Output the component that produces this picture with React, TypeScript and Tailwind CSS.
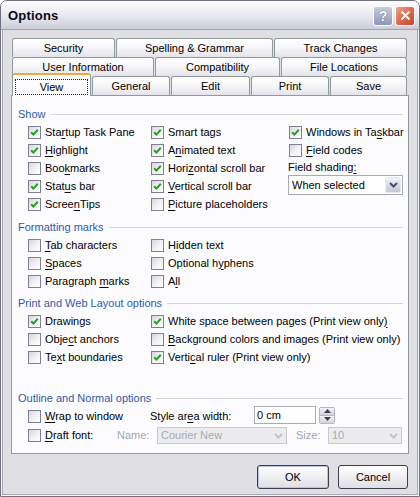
import React from 'react';

type Item = { t: string; u?: number; on?: boolean };

const Mn = ({ t, u }: { t: string; u?: number }) =>
  u === undefined ? (
    <>{t}</>
  ) : (
    <>
      {t.slice(0, u)}
      <span className="underline underline-offset-[2px]">{t[u]}</span>
      {t.slice(u + 1)}
    </>
  );

const Box = ({ on }: { on?: boolean }) => (
  <span className="flex h-[13px] w-[13px] shrink-0 items-center justify-center border border-[#7d8090] bg-gradient-to-br from-[#d6d6dc] via-[#f1f1f3] to-white">
    {on && (
      <svg width="9" height="9" viewBox="0 0 9 9">
        <path d="M1.2 4.2 L3.4 6.6 L7.8 1.8" fill="none" stroke="#21a121" strokeWidth="2" />
      </svg>
    )}
  </span>
);

const Chk = ({ t, u, on }: Item) => (
  <div className="flex h-[18px] items-center">
    <Box on={on} />
    <span className="ml-[4px] whitespace-nowrap">
      <Mn t={t} u={u} />
    </span>
  </div>
);

const Tab = ({ t, w }: { t: string; w: string }) => (
  <div
    className={`flex h-[19px] shrink-0 items-center justify-center rounded-t-[3px] border border-b-0 border-[#919b9c] bg-gradient-to-b from-white via-[#f6f6f9] to-[#e3e3ea] ${w}`}
  >
    {t}
  </div>
);

const Group = ({ t, className }: { t: string; className: string }) => (
  <div className={`flex h-[16px] items-center pl-[6px] ${className}`}>
    <span className="text-[#2f5aa8]">{t}</span>
    <div className="ml-[5px] mr-[5px] h-px flex-1 bg-[#d3d3dc]" />
  </div>
);

const Chevron = ({ c }: { c: string }) => (
  <svg width="9" height="6" viewBox="0 0 9 6">
    <path d="M1 1 L4.5 4.5 L8 1" fill="none" stroke={c} strokeWidth="2" />
  </svg>
);

const showCols: Item[][] = [
  [
    { t: 'Startup Task Pane', u: 3, on: true },
    { t: 'Highlight', u: 0, on: true },
    { t: 'Bookmarks', u: 3 },
    { t: 'Status bar', u: 4, on: true },
    { t: 'ScreenTips', u: 5, on: true },
  ],
  [
    { t: 'Smart tags', on: true },
    { t: 'Animated text', u: 1, on: true },
    { t: 'Horizontal scroll bar', u: 4, on: true },
    { t: 'Vertical scroll bar', u: 0, on: true },
    { t: 'Picture placeholders', u: 0 },
  ],
];

const fmtCols: Item[][] = [
  [
    { t: 'Tab characters', u: 0 },
    { t: 'Spaces', u: 0 },
    { t: 'Paragraph marks', u: 10 },
  ],
  [
    { t: 'Hidden text', u: 1 },
    { t: 'Optional hyphens', u: 10 },
    { t: 'All', u: 1 },
  ],
];

const printCols: Item[][] = [
  [
    { t: 'Drawings', on: true },
    { t: 'Object anchors', u: 4 },
    { t: 'Text boundaries', u: 2 },
  ],
  [
    { t: 'White space between pages (Print view only)', u: 42, on: true },
    { t: 'Background colors and images (Print view only)', u: 0 },
    { t: 'Vertical ruler (Print view only)', u: 5, on: true },
  ],
];

const TwoCols = ({ cols }: { cols: Item[][] }) => (
  <div className="mt-[1px] flex pl-[16px]">
    <div className="w-[123px]">
      {cols[0].map((i) => (
        <Chk key={i.t} {...i} />
      ))}
    </div>
    <div>
      {cols[1].map((i) => (
        <Chk key={i.t} {...i} />
      ))}
    </div>
  </div>
);

export default function App() {
  return (
    <div className="h-[497px] w-[420px] bg-white">
      <div className="flex h-[497px] w-[420px] flex-col rounded-t-[7px] border border-[#70707f] bg-[#e0dfe3] font-['Liberation_Sans',Arial,sans-serif] text-[11px] leading-none text-black shadow-[inset_0_0_0_1px_#f6f6f9,inset_0_0_0_2px_#a9a9b6]">
        {/* title bar */}
        <div className="flex h-[29px] shrink-0 items-center rounded-t-[6px] border-b border-[#a2a2b2] bg-gradient-to-b from-[#fefefe] via-[#e9e9f0] to-[#cdcdd8] pl-[7px] pr-[4px]">
          <span className="mt-[1px] text-[13px] font-bold tracking-[0.2px] text-[#0b0b14]">Options</span>
          <div className="ml-auto mt-[1px] flex gap-[2px]">
            <div className="flex h-[20px] w-[20px] items-center justify-center rounded-[3px] border border-white bg-gradient-to-b from-[#c8cbe0] to-[#8f95b8] text-[14px] font-bold text-white [text-shadow:0_0_1px_#333]">
              ?
            </div>
            <div className="flex h-[20px] w-[20px] items-center justify-center rounded-[3px] border border-white bg-gradient-to-br from-[#f0a08a] via-[#dd6a50] to-[#c8402a]">
              <svg width="11" height="11" viewBox="0 0 11 11">
                <path d="M1.5 1.5 L9.5 9.5 M9.5 1.5 L1.5 9.5" stroke="white" strokeWidth="2" />
              </svg>
            </div>
          </div>
        </div>

        {/* body */}
        <div className="pl-[10px] pt-[8px]">
          <div className="ml-[1px] flex gap-[1px]">
            <Tab t="Security" w="w-[103px]" />
            <Tab t="Spelling & Grammar" w="w-[157px]" />
            <Tab t="Track Changes" w="w-[133px]" />
          </div>
          <div className="ml-[1px] flex gap-[1px]">
            <Tab t="User Information" w="w-[142px]" />
            <Tab t="Compatibility" w="w-[125px]" />
            <Tab t="File Locations" w="w-[126px]" />
          </div>
          <div className="ml-[1px] flex h-[19px] items-end gap-[1px]">
            <div className="relative z-10 mb-[-1px] flex h-[23px] w-[79px] shrink-0 rounded-t-[3px] border-x border-t-2 border-x-[#919b9c] border-t-[#f2a73a] bg-[#fcfcfe] px-[2px] pb-[1px] pt-[4px]">
              <div className="flex flex-1 items-center justify-center border border-dotted border-[#222]">View</div>
            </div>
            <Tab t="General" w="w-[78px]" />
            <Tab t="Edit" w="w-[79px]" />
            <Tab t="Print" w="w-[78px]" />
            <Tab t="Save" w="w-[77px]" />
          </div>

          {/* panel */}
          <div className="h-[359px] w-[398px] border border-[#919b9c] bg-[#fcfcfe]">
            <Group t="Show" className="mt-[10px]" />
            <div className="mt-[1px] flex pl-[16px]">
              <div className="w-[123px]">
                {showCols[0].map((i) => (
                  <Chk key={i.t} {...i} />
                ))}
              </div>
              <div className="w-[137px]">
                {showCols[1].map((i) => (
                  <Chk key={i.t} {...i} />
                ))}
              </div>
              <div className="w-[115px]">
                <div className="ml-[1px]">
                  <Chk t="Windows in Taskbar" u={13} on />
                  <Chk t="Field codes" u={0} />
                </div>
                <div className="flex h-[16px] items-center">
                  Field shading<span className="underline underline-offset-[2px]">:</span>
                </div>
                <div className="flex h-[20px] items-center border border-[#a5acb5] bg-white">
                  <span className="flex-1 pl-[3px]">When selected</span>
                  <div className="m-[1px] flex h-[16px] w-[16px] items-center justify-center rounded-[2px] border border-[#e8e8f0] bg-gradient-to-b from-[#f2f2f7] to-[#c5c5d4]">
                    <Chevron c="#4d4f6a" />
                  </div>
                </div>
              </div>
            </div>

            <Group t="Formatting marks" className="mt-[6px]" />
            <TwoCols cols={fmtCols} />

            <Group t="Print and Web Layout options" className="mt-[5px]" />
            <TwoCols cols={printCols} />

            <Group t="Outline and Normal options" className="mt-[24px]" />
            <div className="mt-[1px] flex h-[19px] items-center pl-[16px]">
              <div className="w-[122px]">
                <Chk t="Wrap to window" u={0} />
              </div>
              <span className="w-[104px]">
                <Mn t="Style area width:" u={8} />
              </span>
              <div className="-mt-[3px] flex h-[18px] w-[62px] items-center border border-[#a5acb5] bg-white pl-[2px]">0 cm</div>
              <div className="-mt-[3px] ml-[3px] flex h-[17px] w-[16px] flex-col overflow-hidden rounded-[2px] border border-[#b5b5c4]">
                <div className="flex flex-1 items-center justify-center border-b border-[#b5b5c4] bg-gradient-to-b from-[#f4f4f8] to-[#d3d3de]">
                  <svg width="7" height="4" viewBox="0 0 7 4">
                    <path d="M0 4 L3.5 0 L7 4 Z" fill="#3c3e58" />
                  </svg>
                </div>
                <div className="flex flex-1 items-center justify-center bg-gradient-to-b from-[#f4f4f8] to-[#d3d3de]">
                  <svg width="7" height="4" viewBox="0 0 7 4">
                    <path d="M0 0 L3.5 4 L7 0 Z" fill="#3c3e58" />
                  </svg>
                </div>
              </div>
            </div>
            <div className="flex h-[19px] items-center pl-[16px]">
              <div className="w-[89px]">
                <Chk t="Draft font:" u={0} />
              </div>
              <span className="w-[40px] text-[#a6a6ae]">Name:</span>
              <div className="flex h-[17px] w-[130px] items-center border border-[#cacad2] bg-[#ececef]">
                <span className="flex-1 pl-[3px] text-[#a8a8b0]">Courier New</span>
                <div className="m-[1px] flex h-[13px] w-[13px] items-center justify-center">
                  <Chevron c="#c2c2cc" />
                </div>
              </div>
              <span className="ml-[9px] w-[32px] text-[#a6a6ae]">Size:</span>
              <div className="flex h-[17px] w-[74px] items-center border border-[#cacad2] bg-[#ececef]">
                <span className="flex-1 pl-[3px] text-[#a8a8b0]">10</span>
                <div className="m-[1px] flex h-[13px] w-[13px] items-center justify-center">
                  <Chevron c="#c2c2cc" />
                </div>
              </div>
            </div>
          </div>

          {/* buttons */}
          <div className="mt-[11px] flex w-[398px] justify-end gap-[9px] pr-[1px]">
            <div className="flex h-[24px] w-[72px] items-center justify-center rounded-[3px] border border-[#3d3d52] bg-gradient-to-b from-white to-[#dedee6] shadow-[inset_0_0_0_1px_#b9c4e4]">
              OK
            </div>
            <div className="flex h-[24px] w-[70px] items-center justify-center rounded-[3px] border border-[#3d3d52] bg-gradient-to-b from-white to-[#dedee6]">
              Cancel
            </div>
          </div>
        </div>
      </div>
    </div>
  );
}
